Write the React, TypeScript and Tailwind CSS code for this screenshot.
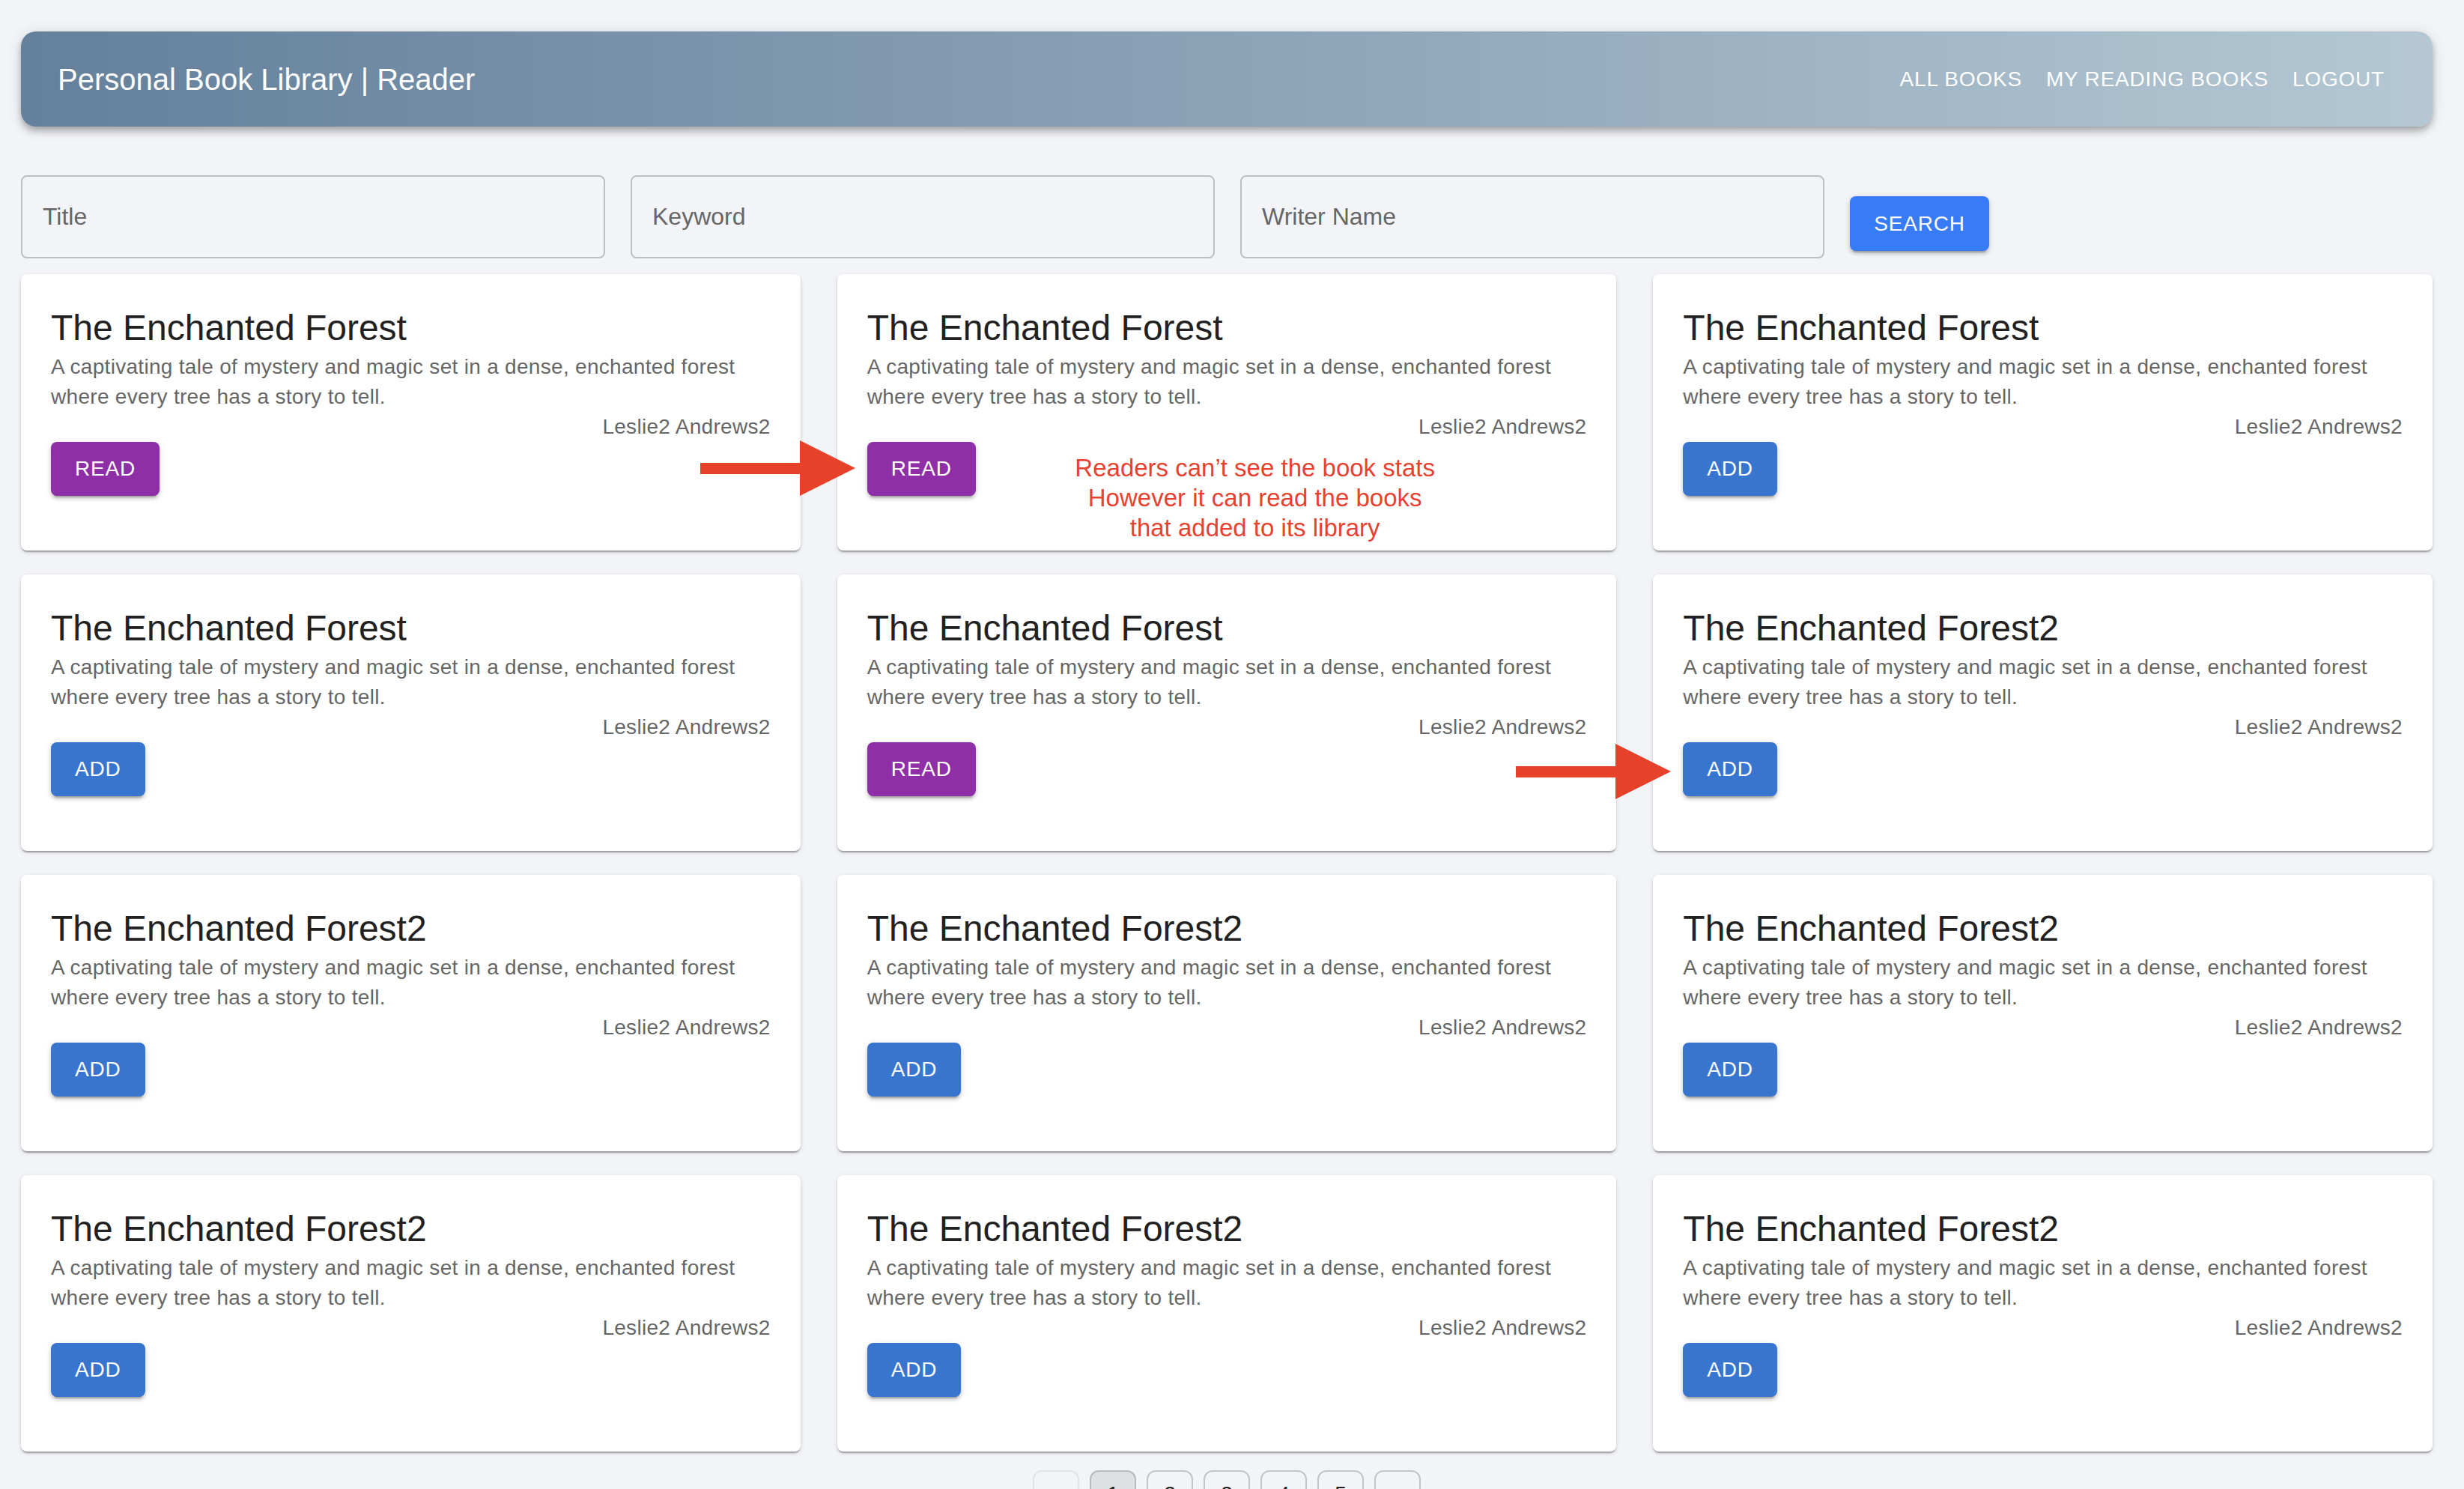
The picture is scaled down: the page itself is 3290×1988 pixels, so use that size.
import React from "react";

interface Book {
  title: string;
  action: "READ" | "ADD";
}

const books: Book[] = [
  { title: "The Enchanted Forest", action: "READ" },
  { title: "The Enchanted Forest", action: "READ" },
  { title: "The Enchanted Forest", action: "ADD" },
  { title: "The Enchanted Forest", action: "ADD" },
  { title: "The Enchanted Forest", action: "READ" },
  { title: "The Enchanted Forest2", action: "ADD" },
  { title: "The Enchanted Forest2", action: "ADD" },
  { title: "The Enchanted Forest2", action: "ADD" },
  { title: "The Enchanted Forest2", action: "ADD" },
  { title: "The Enchanted Forest2", action: "ADD" },
  { title: "The Enchanted Forest2", action: "ADD" },
  { title: "The Enchanted Forest2", action: "ADD" },
];

const buttonShadow =
  "shadow-[0_6px_2px_-4px_rgba(0,0,0,0.2),0_4px_4px_0_rgba(0,0,0,0.14),0_2px_10px_0_rgba(0,0,0,0.12)]";

const Arrow: React.FC<{ className: string }> = ({ className }) => (
  <svg className={className} width="207" height="74" viewBox="0 0 207 74">
    <rect x="0" y="30" width="134" height="15" fill="#e8412a" />
    <polygon points="133,0 207,37 133,74" fill="#e8412a" />
  </svg>
);

const BookCard: React.FC<{ book: Book; note?: boolean }> = ({ book, note }) => (
  <div className="relative h-[369px] rounded-[8px] bg-white p-[40px] shadow-[0_4px_2px_-2px_rgba(0,0,0,0.2),0_2px_2px_0_rgba(0,0,0,0.14),0_2px_6px_0_rgba(0,0,0,0.12)]">
    <h2 className="text-[48px] leading-[64px] text-[#212121]">{book.title}</h2>
    <p className="text-[28px] leading-[40px] tracking-[0.3px] text-[#666666]">
      A captivating tale of mystery and magic set in a dense, enchanted forest
      where every tree has a story to tell.
    </p>
    <p className="text-right text-[28px] leading-[40px] tracking-[0.3px] text-[#666666]">
      Leslie2 Andrews2
    </p>
    <button
      className={`h-[72px] rounded-[8px] px-[32px] text-[28px] uppercase tracking-[0.8px] text-white ${buttonShadow} ${
        book.action === "READ" ? "bg-[#8e2fa7]" : "bg-[#3875cf]"
      }`}
    >
      {book.action}
    </button>
    {note && (
      // annotation overlay from the original screenshot
      <div className="absolute left-[298px] top-[239px] w-[520px] text-center text-[33px] leading-[40px] text-[#e8412f]">
        <p>Readers can’t see the book stats</p>
        <p>However it can read the books</p>
        <p>that added to its library</p>
      </div>
    )}
  </div>
);

export default function App() {
  return (
    <div className="relative h-[1988px] overflow-hidden bg-[#f3f4f8] font-['Liberation_Sans',Arial,sans-serif]">
      <div className="ml-[28px] w-[3220px] pt-[42px]">
        <header className="flex h-[127px] items-center justify-between rounded-[20px] bg-gradient-to-r from-[#64809b] to-[#b4c7d3] pl-[49px] pr-[48px] shadow-[0_4px_8px_-2px_rgba(0,0,0,0.2),0_8px_10px_0_rgba(0,0,0,0.14),0_2px_20px_0_rgba(0,0,0,0.12)]">
          <h1 className="text-[40px] text-white">Personal Book Library | Reader</h1>
          <nav className="flex">
            {["All Books", "My Reading Books", "Logout"].map((item) => (
              <button
                key={item}
                className="px-[16px] py-[12px] text-[28px] uppercase tracking-[0.8px] text-white"
              >
                {item}
              </button>
            ))}
          </nav>
        </header>

        <div className="mt-[65px] flex items-start gap-[34px]">
          {["Title", "Keyword", "Writer Name"].map((label) => (
            <input
              key={label}
              placeholder={label}
              className="h-[111px] w-[780px] rounded-[8px] border-2 border-[#bcbec3] bg-transparent px-[27px] text-[32px] text-[#333] placeholder:text-[#666666] focus:outline-none"
            />
          ))}
          <button
            className={`mt-[28px] h-[73px] w-[186px] rounded-[8px] bg-[#387bf6] text-[28px] uppercase tracking-[0.8px] text-white ${buttonShadow}`}
          >
            Search
          </button>
        </div>

        <div className="mt-[21px] grid grid-cols-3 gap-x-[49px] gap-y-[32px]">
          {books.map((book, i) => (
            <BookCard key={i} book={book} note={i === 1} />
          ))}
        </div>

        <div className="mt-[25px] flex justify-center gap-[14px]">
          {["‹", "1", "2", "3", "4", "5", "›"].map((p, i) => (
            <div
              key={i}
              className={`flex h-[64px] w-[62px] items-center justify-center rounded-[12px] border-2 text-[28px] text-[#222] ${
                i === 0
                  ? "border-[#e2e3e6] text-[#bbb]"
                  : i === 1
                  ? "border-[#b9babe] bg-[#dfe0e4]"
                  : "border-[#c4c5c9]"
              }`}
            >
              {p}
            </div>
          ))}
        </div>
      </div>

      <Arrow className="absolute left-[935px] top-[588px]" />
      <Arrow className="absolute left-[2024px] top-[993px]" />
    </div>
  );
}
